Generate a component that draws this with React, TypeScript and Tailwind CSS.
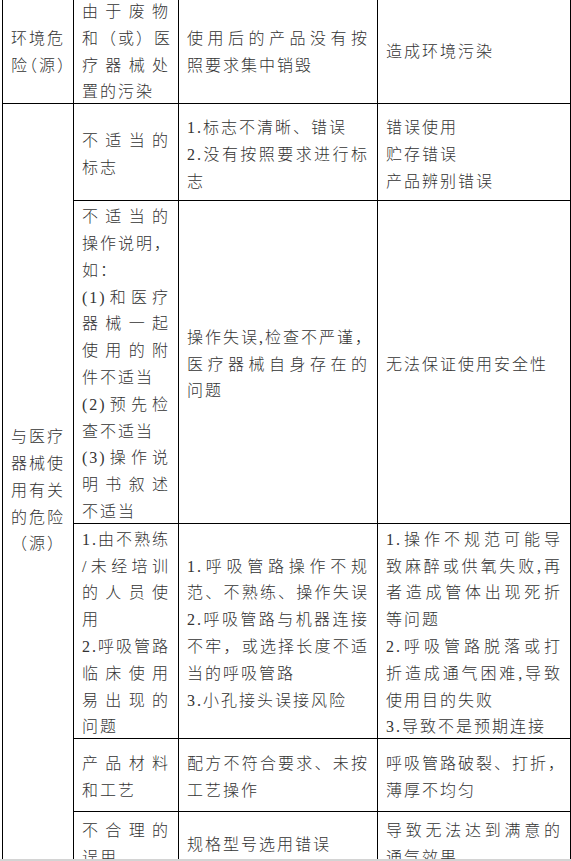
import React from "react";
import clsx from "clsx";

type Cell = { lines: string[]; center?: boolean; rowSpan?: number };

// "^" at the start of a line = justified line (spread to the full cell width)
const rows: { h: string; cells: Cell[] }[] = [
  {
    h: "h-[107px]",
    cells: [
      { lines: ["环境危", "险（源）"], center: true },
      { lines: ["^由于废物", "^和（或）医", "^疗器械处", "置的污染"] },
      { lines: ["^使用后的产品没有按", "照要求集中销毁"] },
      { lines: ["造成环境污染"] },
    ],
  },
  {
    h: "h-[97px]",
    cells: [
      { lines: ["与医疗", "器械使", "用有关", "的危险", "（源）"], center: true, rowSpan: 5 },
      { lines: ["^不适当的", "标志"] },
      { lines: ["1.标志不清晰、错误", "^2.没有按照要求进行标", "志"] },
      { lines: ["错误使用", "贮存错误", "产品辨别错误"] },
    ],
  },
  {
    h: "h-[321px]",
    cells: [
      {
        lines: [
          "^不适当的",
          "操作说明，",
          "如：",
          "^(1)和医疗",
          "^器械一起",
          "^使用的附",
          "件不适当",
          "^(2)预先检",
          "查不适当",
          "^(3)操作说",
          "^明书叙述",
          "不适当",
        ],
      },
      { lines: ["^操作失误,检查不严谨，", "^医疗器械自身存在的", "问题"] },
      { lines: ["无法保证使用安全性"] },
    ],
  },
  {
    h: "h-[215px]",
    cells: [
      { lines: ["^1.由不熟练", "^/未经培训", "^的人员使", "用", "^2.呼吸管路", "^临床使用", "^易出现的", "问题"] },
      {
        lines: [
          "^1.呼吸管路操作不规",
          "^范、不熟练、操作失误",
          "^2.呼吸管路与机器连接",
          "^不牢，或选择长度不适",
          "当的呼吸管路",
          "3.小孔接头误接风险",
        ],
      },
      {
        lines: [
          "^1.操作不规范可能导",
          "^致麻醉或供氧失败,再",
          "^者造成管体出现死折",
          "等问题",
          "^2.呼吸管路脱落或打",
          "^折造成通气困难,导致",
          "使用目的失败",
          "3.导致不是预期连接",
        ],
      },
    ],
  },
  {
    h: "h-[73px]",
    cells: [
      { lines: ["^产品材料", "和工艺"] },
      { lines: ["^配方不符合要求、未按", "工艺操作"] },
      { lines: ["^呼吸管路破裂、打折，", "薄厚不均匀"] },
    ],
  },
  {
    h: "h-[61px]",
    cells: [
      { lines: ["^不合理的", "误用"] },
      { lines: ["规格型号选用错误"] },
      { lines: ["^导致无法达到满意的", "通气效果"] },
    ],
  },
];

// half-width brackets, like the narrow （源） in the first column
const halfParens = (t: string) =>
  t.split(/([（）])/).map((part, i) =>
    part === "（" || part === "）" ? (
      <span key={i} className="[font-feature-settings:'halt']">
        {part}
      </span>
    ) : (
      part
    )
  );

const Line = ({ text, center }: { text: string; center?: boolean }) => {
  const justify = text.startsWith("^");
  const t = justify ? text.slice(1) : text;
  return (
    <div
      className={clsx(
        "whitespace-nowrap",
        justify && "text-justify [text-align-last:justify]",
        center && "text-center"
      )}
    >
      {center ? halfParens(t) : t}
    </div>
  );
};

export default function App() {
  return (
    <div className="h-[861px] flex flex-col overflow-hidden bg-white">
      <div className="flex-1 overflow-hidden">
        <table className="table-fixed border-collapse -mt-[5px] ml-[2px] w-[568px] text-[16px] leading-[26.8px] tracking-[2px] text-[#333] font-light font-['Liberation_Serif','Noto_Sans_CJK_SC',serif]">
          <colgroup>
            <col className="w-[71px]" />
            <col className="w-[105px]" />
            <col className="w-[199px]" />
            <col className="w-[193px]" />
          </colgroup>
          <tbody>
            {rows.map((row, r) => (
              <tr key={r} className={row.h}>
                {row.cells.map((cell, c) => (
                  <td
                    key={c}
                    rowSpan={cell.rowSpan}
                    className="border border-black px-[8px] py-0 align-middle"
                  >
                    <div className="pt-[3px] -mb-[3px]">
                      {cell.lines.map((l, i) => (
                        <Line key={i} text={l} center={cell.center} />
                      ))}
                    </div>
                  </td>
                ))}
              </tr>
            ))}
          </tbody>
        </table>
      </div>
      <div className="h-[2px] bg-[#d4d4d4]" />
    </div>
  );
}
